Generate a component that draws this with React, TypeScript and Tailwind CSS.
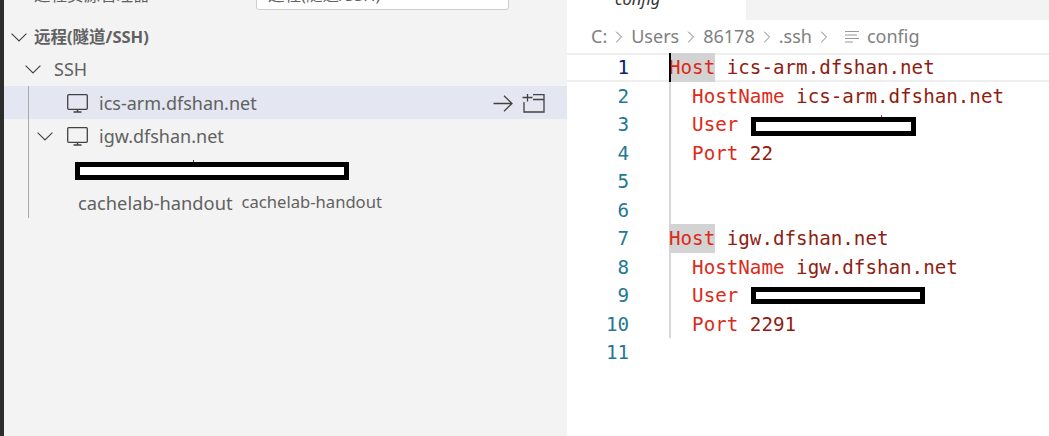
import React from 'react';
import { ChevronRight } from 'lucide-react';

const uiFont = { fontFamily: '"Noto Sans", "Noto Sans CJK SC", sans-serif' };

function Chevron() {
  return (
    <svg width="16" height="9" viewBox="0 0 16 9" fill="none" stroke="#424242" strokeWidth="1.1" className="shrink-0">
      <path d="M.6.6 8 8 15.4.6" />
    </svg>
  );
}

function VmIcon() {
  return (
    <svg width="21" height="19" viewBox="0 0 21 19" fill="none" stroke="#424242" className="shrink-0">
      <rect x=".7" y=".7" width="19.6" height="14.6" rx="1" strokeWidth="1.3" />
      <path d="M10.5 15.5v2.4M6.5 18h8" strokeWidth="1.5" />
    </svg>
  );
}

function ArrowIcon() {
  return (
    <svg width="20" height="17" viewBox="0 0 20 17" fill="none" stroke="#424242" strokeWidth="1.3" className="shrink-0">
      <path d="M.5 8.5H19M11 .8l8 7.7-8 7.7" />
    </svg>
  );
}

function NewWindowIcon() {
  return (
    <svg width="23" height="19" viewBox="0 0 23 19" fill="none" stroke="#424242" strokeWidth="1.3" className="shrink-0">
      <path d="M2 8v10h20V.7H11" />
      <path d="M5.5 0v7.5M.5 3.5h10M11 5.5h11" />
    </svg>
  );
}

function ListIcon() {
  return (
    <svg width="14" height="14" viewBox="0 0 14 14" fill="none" stroke="#999999" strokeWidth="1.2" className="shrink-0">
      <path d="M0 1.5h14M0 5h12M0 8.5h14M0 12h8" />
    </svg>
  );
}

function TreeRow({ children, active, className }: { children: React.ReactNode; active?: boolean; className?: string }) {
  return (
    <div className={`h-[33px] flex items-center ${active ? 'bg-[#e4e6f1]' : ''} ${className ?? ''}`}>
      {children}
    </div>
  );
}

function Redacted({ w, h, tick, tickColor }: { w: number; h: number; tick?: number; tickColor?: string }) {
  return (
    <span className="relative inline-block border-[5px] border-black bg-white box-border" style={{ width: w, height: h }}>
      {tick !== undefined && (
        <span className="absolute -top-[7px] w-px h-[2px]" style={{ left: tick, backgroundColor: tickColor }} />
      )}
    </span>
  );
}

function Sidebar() {
  return (
    <div className="w-[563px] bg-[#f3f3f3] text-[#616161] text-[18px] shrink-0" style={uiFont}>
      <div className="h-[20px] overflow-hidden">
        <div className="h-[22px] -mt-[12px] flex items-center pl-[30px] text-[16.5px]">
          <span className="w-[222px] -mt-[8px] whitespace-nowrap">远程资源管理器</span>
          <div className="w-[253px] h-[22px] bg-white border border-[#cecece] rounded-[3px] pl-[11px] flex items-center">
            <span className="-mt-[8px] whitespace-nowrap">远程(隧道/SSH)</span>
          </div>
        </div>
      </div>
      <div className="h-[33px] flex items-center pl-[7px] pt-[2px] font-bold text-[16.5px]">
        <Chevron />
        <span className="ml-[7px]">远程(隧道/SSH)</span>
      </div>
      <TreeRow className="pl-[21px]">
        <Chevron />
        <span className="ml-[13px]">SSH</span>
      </TreeRow>
      <div className="relative">
        <div className="absolute left-[24px] top-0 bottom-0 w-px bg-[#a9a9a9] z-10" />
        <TreeRow active className="pl-[63px] pr-[22px] pt-[2px]">
          <VmIcon />
          <span className="ml-[11px] flex-1">ics-arm.dfshan.net</span>
          <ArrowIcon />
          <span className="ml-[9px] flex"><NewWindowIcon /></span>
        </TreeRow>
        <TreeRow className="pl-[33px] pt-[2px]">
          <Chevron />
          <span className="ml-[14px] flex"><VmIcon /></span>
          <span className="ml-[11px]">igw.dfshan.net</span>
        </TreeRow>
        <TreeRow className="pl-[71px]">
          <span className="flex mt-[5px]"><Redacted w={274} h={18} tick={113} tickColor="#333333" /></span>
        </TreeRow>
        <TreeRow className="pl-[74px] pt-[2px]">
          <span className="text-[18.3px]">cachelab-handout</span>
          <span className="ml-[9px] text-[16.6px]">cachelab-handout</span>
        </TreeRow>
      </div>
    </div>
  );
}

const Key = ({ children }: { children: React.ReactNode }) => <span className="text-[#dc2a1a]">{children}</span>;
const Val = ({ children }: { children: React.ReactNode }) => <span className="text-[#8f1d12]">{children}</span>;

function CodeLine({ n, children, bar }: { n: number; children?: React.ReactNode; bar?: boolean }) {
  return (
    <div className="h-[28.5px] flex items-start leading-[30.5px]">
      <span className="w-[62px] text-right text-[#237893]">{n}</span>
      <div className="ml-[40px] flex-1 h-[28.5px] flex items-start relative">
        {bar && <span className="absolute left-0 top-0 bottom-0 w-[2px] bg-[#d8d8d8]" />}
        {children}
      </div>
    </div>
  );
}

function Editor() {
  return (
    <div className="flex-1 min-w-0 bg-white">
      <div className="h-[20px] flex">
        <div className="w-[179px] text-[#333333] text-[16.5px] italic leading-none pl-[48px] overflow-hidden" style={uiFont}>
          <span className="block -mt-[9px]">config</span>
        </div>
        <div className="flex-1 bg-[#f3f3f3]" />
      </div>
      <div className="h-[33px] flex items-center pl-[24px] text-[18px] text-[#808080]" style={uiFont}>
        C:
        <ChevronRight size={20} strokeWidth={1.2} className="mx-[2px]" />
        Users
        <ChevronRight size={20} strokeWidth={1.2} className="mx-[2px]" />
        86178
        <ChevronRight size={20} strokeWidth={1.2} className="mx-[2px]" />
        .ssh
        <ChevronRight size={20} strokeWidth={1.2} className="ml-[2px]" />
        <span className="ml-[11px] mr-[8px] flex"><ListIcon /></span>
        config
      </div>
      <div className="text-[19.2px] whitespace-pre" style={{ fontFamily: '"DejaVu Sans Mono", monospace' }}>
        <div className="h-[28.5px] flex items-start leading-[30.5px] border-y-2 border-[#eeeeee] box-border">
          <span className="w-[62px] -mt-[2px] text-right text-[#0b216f]">1</span>
          <div className="ml-[40px] flex-1 h-[28.5px] -mt-[2px] flex items-start relative">
            <span className="absolute left-0 top-0 bottom-0 w-[2px] bg-black z-10" />
            <span className="bg-[#d3d3d3] h-[28.5px]"><Key>Host</Key></span>
            <Val> ics-arm.dfshan.net</Val>
          </div>
        </div>
        <CodeLine n={2} bar><Key>  HostName</Key><Val> ics-arm.dfshan.net</Val></CodeLine>
        <CodeLine n={3} bar>
          <Key>  User</Key>
          <span className="ml-[13px] mt-[7px] flex"><Redacted w={165} h={19} tick={125} tickColor="#c0392b" /></span>
        </CodeLine>
        <CodeLine n={4} bar><Key>  Port</Key><Val> 22</Val></CodeLine>
        <CodeLine n={5} bar />
        <CodeLine n={6} bar />
        <CodeLine n={7}>
          <span className="bg-[#d3d3d3] h-[28.5px]"><Key>Host</Key></span>
          <Val> igw.dfshan.net</Val>
        </CodeLine>
        <CodeLine n={8} bar><Key>  HostName</Key><Val> igw.dfshan.net</Val></CodeLine>
        <CodeLine n={9} bar>
          <Key>  User</Key>
          <span className="ml-[13px] mt-[6px] flex"><Redacted w={174} h={17} /></span>
        </CodeLine>
        <CodeLine n={10} bar><Key>  Port</Key><Val> 2291</Val></CodeLine>
        <CodeLine n={11} />
      </div>
    </div>
  );
}

export default function App() {
  return (
    <div className="w-[1049px] h-[436px] flex overflow-hidden bg-white">
      <div className="w-[4px] bg-[#2c2c2c] shrink-0" />
      <Sidebar />
      <Editor />
    </div>
  );
}
